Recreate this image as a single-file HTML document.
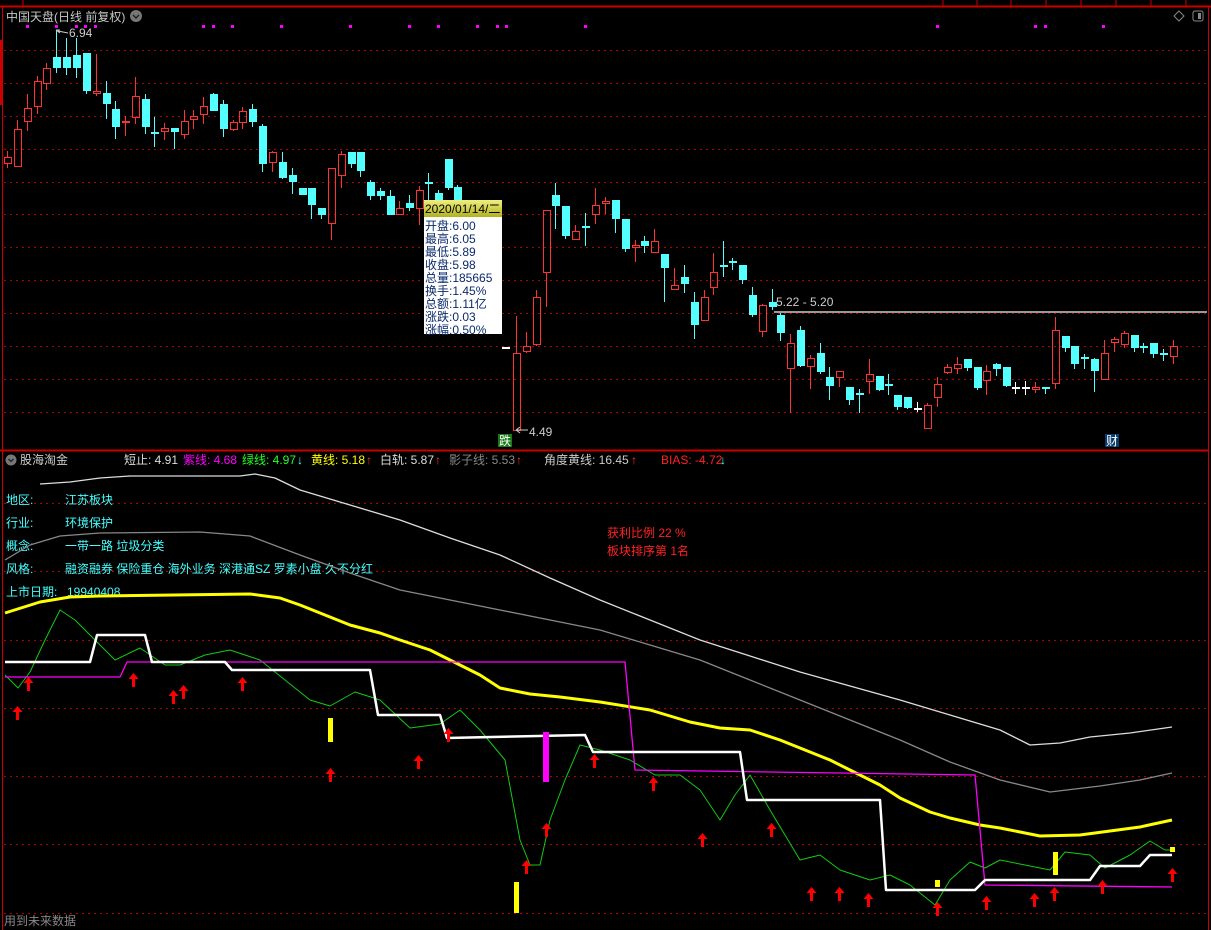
<!DOCTYPE html>
<html><head><meta charset="utf-8"><style>
html,body{margin:0;padding:0;background:#000;width:1211px;height:930px;overflow:hidden}
body{font-family:"Liberation Sans","Noto Sans CJK SC",sans-serif}
svg{position:absolute;left:0;top:0}
.t{font-family:"Liberation Sans","Noto Sans CJK SC",sans-serif;font-size:12px}
</style></head><body>
<svg id="s" width="1211" height="930" xmlns="http://www.w3.org/2000/svg">
<g id="grid" stroke="#b00000" stroke-width="1" stroke-dasharray="2,4"></g>
<line x1="0" y1="6.5" x2="1211" y2="6.5" stroke="#c00" stroke-width="2"/>
<g stroke="#c00"><line x1="23" y1="0" x2="23" y2="6"/><line x1="943" y1="0" x2="943" y2="6"/><line x1="977" y1="0" x2="977" y2="6"/><line x1="1011" y1="0" x2="1011" y2="6"/><line x1="1046" y1="0" x2="1046" y2="6"/><line x1="1081" y1="0" x2="1081" y2="6"/><line x1="1116" y1="0" x2="1116" y2="6"/><line x1="1151" y1="0" x2="1151" y2="6"/><line x1="1186" y1="0" x2="1186" y2="6"/></g>
<line x1="2.5" y1="6" x2="2.5" y2="930" stroke="#c00"/>
<rect x="0" y="40" width="2" height="65" fill="#c00"/>
<line x1="1208.5" y1="6" x2="1208.5" y2="930" stroke="#c00"/>
<line x1="0" y1="450.5" x2="1208" y2="450.5" stroke="#c00" stroke-width="2"/>
<text x="6" y="21" class="t" fill="#c8c8c8" font-size="13">中国天盘(日线 前复权)</text>
<circle cx="136" cy="16" r="6" fill="#777"/><path d="M133 15l3 3 3-3" stroke="#222" fill="none" stroke-width="1.5"/>
<path d="M1179 11l5 5-5 5-5-5z" stroke="#888" fill="none"/>
<rect x="1193" y="11" width="10" height="10" rx="2" stroke="#888" fill="none"/><rect x="1198" y="13" width="3" height="6" fill="#888"/>
<g id="dots" fill="#f0f"></g>
<g id="cand"></g>
<path d="M56 30 l4 0 M56 30 l4 3 M58 31 l10 2" stroke="#ccc" fill="none"/>
<text x="69" y="37" class="t" fill="#ccc">6.94</text>
<path d="M516 430 l12 0 M516 430 l4 -3 M516 430 l4 3" stroke="#ccc" fill="none"/>
<text x="529" y="436" class="t" fill="#ccc">4.49</text>
<rect x="498" y="434" width="14" height="13" fill="#1a7a1a"/><text x="499" y="445" class="t" fill="#fff" font-size="11">跌</text>
<rect x="1105" y="434" width="14" height="13" fill="#0a3a6a"/><text x="1106" y="445" class="t" fill="#fff" font-size="11">财</text>
<line x1="774" y1="312" x2="1207" y2="312" stroke="#999" stroke-width="2"/>
<text x="776" y="306" class="t" fill="#ccc">5.22 - 5.20</text>
<defs><linearGradient id="tg" x1="0" y1="0" x2="0" y2="1"><stop offset="0" stop-color="#f0f080"/><stop offset="1" stop-color="#b0b020"/></linearGradient></defs>
<rect x="424" y="200" width="78" height="134" fill="#fff"/>
<rect x="424" y="200" width="78" height="17" fill="url(#tg)"/>
<g class="t" fill="#0a2a6a" font-size="11">
<text x="425" y="213" fill="#000">2020/01/14/二</text>
<text x="425" y="230">开盘:6.00</text><text x="425" y="243">最高:6.05</text><text x="425" y="256">最低:5.89</text><text x="425" y="269">收盘:5.98</text><text x="425" y="282">总量:185665</text><text x="425" y="295">换手:1.45%</text><text x="425" y="308">总额:1.11亿</text><text x="425" y="321">涨跌:0.03</text><text x="425" y="334">涨幅:0.50%</text>
</g>
<circle cx="11" cy="460" r="5.5" fill="#777"/><path d="M8.5 459l2.5 2.5 2.5-2.5" stroke="#222" fill="none" stroke-width="1.3"/>
<text x="20" y="464" class="t" fill="#ccc">股海淘金</text>
<text x="124" y="464" class="t" fill="#ddd">短止: 4.91</text>
<text x="183" y="464" class="t" fill="#f0f">紫线: 4.68</text>
<text x="242" y="464" class="t" fill="#2f2">绿线: 4.97</text><text x="297" y="464" class="t" fill="#5ff">↓</text>
<text x="311" y="464" class="t" fill="#ff0">黄线: 5.18</text><text x="366" y="464" class="t" fill="#f33">↑</text>
<text x="380" y="464" class="t" fill="#ddd">白轨: 5.87</text><text x="435" y="464" class="t" fill="#f33">↑</text>
<text x="449" y="464" class="t" fill="#888">影子线: 5.53</text><text x="516" y="464" class="t" fill="#f33">↑</text>
<text x="544" y="464" class="t" fill="#ccc">角度黄线: 16.45</text><text x="631" y="464" class="t" fill="#f33">↑</text>
<text x="661" y="464" class="t" fill="#f22">BIAS: -4.72</text><text x="720" y="464" class="t" fill="#5ff">↓</text>
<g class="t" fill="#4ff">
<text x="6" y="504">地区:</text><text x="65" y="504">江苏板块</text>
<text x="6" y="527">行业:</text><text x="65" y="527">环境保护</text>
<text x="6" y="550">概念:</text><text x="65" y="550">一带一路 垃圾分类</text>
<text x="6" y="573">风格:</text><text x="65" y="573">融资融券 保险重仓 海外业务 深港通SZ 罗素小盘 久不分红</text>
<text x="6" y="596">上市日期:</text><text x="67" y="596">19940408</text>
</g>
<text x="607" y="537" class="t" fill="#f22">获利比例 22 %</text>
<text x="607" y="555" class="t" fill="#f22">板块排序第 1名</text>
<text x="4" y="925" class="t" fill="#888">用到未来数据</text>
<g fill="none" stroke-linejoin="round">
<polyline stroke="#ddd" stroke-width="1.3" points="40,484 70,482 100,478 130,476 240,476 255,474 275,478 300,490 350,505 400,520 450,538 500,555 550,578 600,600 650,620 700,640 750,656 800,672 850,686 900,700 950,715 1000,730 1030,745 1060,743 1090,737 1130,733 1172,727"/>
<polyline stroke="#888" stroke-width="1.3" points="5,560 30,545 60,536 100,533 200,532 250,536 300,555 350,573 400,590 450,600 500,610 550,620 600,630 650,645 700,660 750,680 800,700 850,720 900,740 950,762 1000,780 1050,792 1100,786 1140,780 1172,773"/>
<polyline stroke="#ff0" stroke-width="3" points="5,613 40,602 70,597 100,596 250,594 280,598 300,605 330,617 350,625 380,633 400,640 430,650 450,660 480,675 500,688 530,694 560,697 600,702 650,710 690,722 720,728 750,730 780,740 800,748 830,760 850,770 880,785 900,798 930,812 950,818 980,825 1000,828 1040,836 1080,835 1110,831 1140,827 1172,820"/>
<polyline stroke="#1c1" stroke-width="1" points="5,675 18,688 30,672 45,640 60,610 75,620 90,635 115,660 140,648 165,665 180,665 205,655 230,650 260,660 285,680 310,700 330,706 355,692 380,700 410,728 440,724 460,710 480,730 505,760 520,840 530,865 540,865 550,820 565,780 580,745 600,750 630,760 655,775 680,775 700,790 720,820 735,795 750,775 770,810 800,860 820,855 840,870 870,880 890,875 910,885 935,905 950,880 970,862 985,868 1000,860 1025,865 1050,870 1065,852 1090,855 1105,868 1130,855 1150,841 1165,850 1172,850"/>
<polyline stroke="#f0f" stroke-width="1.3" points="5,677 120,677 127,662 625,662 635,770 975,775 985,885 1172,887"/>
<polyline stroke="#fff" stroke-width="2.5" points="5,662 90,662 97,635 145,635 152,662 225,662 232,670 370,670 378,715 440,715 447,738 585,735 593,752 740,752 747,800 880,800 886,890 975,890 985,880 1090,880 1100,866 1140,866 1150,855 1172,855"/>
</g>
<g fill="#ff0"><rect x="328" y="718" width="5" height="24"/><rect x="514" y="882" width="5" height="31"/><rect x="935" y="880" width="5" height="7"/><rect x="1053" y="852" width="5" height="23"/><rect x="1170" y="847" width="5" height="5"/></g>
<rect x="543" y="732" width="6" height="50" fill="#f0f"/>
<g id="arr" fill="#f00"></g>
</svg>
<script>
var s=document.getElementById('s'),NS='http://www.w3.org/2000/svg';
function el(p,t,a){var e=document.createElementNS(NS,t);for(var k in a)e.setAttribute(k,a[k]);p.appendChild(e);return e;}
var g=document.getElementById('grid');
[50,83,116,149,182,214,247,280,313,346,379,412,503,571,640,708,776,844,913].forEach(function(y){el(g,'line',{x1:4,y1:y+.5,x2:1207,y2:y+.5});});
var d=document.getElementById('dots');
[27,56,76,85,95,203,213,232,281,350,409,438,477,497,506,585,937,1035,1045,1103].forEach(function(x){el(d,'rect',{x:x-1,y:25,width:3,height:3});});
var C=[[7,157,163,151,168,'r'],[17,129,166,120,166,'r'],[27,108,121,94,131,'r'],[37,81,106,76,114,'r'],[46,68,83,63,90,'r'],[56,57,68,30,73,'c'],[66,57,68,38,75,'c'],[76,55,68,38,78,'c'],[86,53,91,53,94,'c'],[96,91,93,54,96,'r'],[106,93,104,81,119,'c'],[115,109,127,101,139,'c'],[125,121,122,116,136,'r'],[135,96,117,77,124,'r'],[145,99,127,94,134,'c'],[154,132,134,117,147,'c'],[164,128,131,123,140,'r'],[174,128,132,128,149,'c'],[184,121,134,110,139,'r'],[193,116,119,110,129,'r'],[203,106,114,97,124,'r'],[213,94,111,93,111,'c'],[223,104,129,100,137,'c'],[233,122,129,120,131,'r'],[242,111,122,107,129,'r'],[252,109,122,104,127,'c'],[262,126,164,124,172,'c'],[272,152,162,151,172,'r'],[282,162,178,152,179,'c'],[292,175,182,168,194,'c'],[302,188,195,188,192,'c'],[311,188,205,188,219,'c'],[321,208,215,208,219,'c'],[331,168,223,168,240,'r'],[341,154,175,151,188,'r'],[351,152,164,152,168,'c'],[360,152,171,152,177,'c'],[370,182,196,180,200,'c'],[380,191,196,188,200,'c'],[390,196,215,190,215,'c'],[399,208,214,201,214,'r'],[409,203,208,195,211,'c'],[419,190,208,186,225,'r'],[428,182,184,173,200,'c'],[438,193,205,190,210,'c'],[448,159,188,159,190,'c'],[457,187,200,185,205,'c'],
[505,347,349,347,349,'w'],[516,353,430,316,430,'r'],[526,346,351,332,353,'r'],[536,297,344,290,346,'r'],[546,210,272,210,307,'r'],[555,195,206,183,229,'c'],[565,206,236,206,239,'c'],[575,231,239,225,240,'r'],[585,226,228,213,246,'c'],[595,205,214,188,224,'r'],[605,201,203,197,214,'r'],[615,200,219,200,233,'c'],[625,219,249,219,252,'c'],[635,245,247,240,262,'r'],[644,241,246,236,253,'c'],[654,241,252,229,252,'r'],[664,254,268,254,302,'c'],[674,285,289,268,290,'r'],[684,277,284,265,293,'c'],[694,302,325,292,339,'c'],[704,297,320,290,320,'r'],[713,272,287,253,295,'r'],[723,265,267,241,277,'c'],[732,261,263,258,270,'c'],[742,265,280,265,284,'c'],[752,295,315,287,317,'c'],[762,305,331,304,337,'r'],[772,302,307,289,310,'c'],
[780,315,333,313,341,'c'],[790,343,368,334,413,'r'],[800,330,366,326,367,'c'],[810,358,366,355,389,'r'],[820,353,372,343,374,'c'],[829,377,386,367,400,'c'],[839,371,377,371,387,'r'],[849,387,400,387,405,'c'],[859,393,395,389,413,'c'],[869,374,381,359,394,'r'],[879,376,390,376,391,'c'],[888,384,386,374,395,'c'],[897,395,407,395,410,'c'],[907,397,408,397,409,'c'],[917,408,410,402,412,'w'],[927,405,428,403,428,'r'],[937,384,397,377,407,'r'],[947,367,372,364,374,'r'],[957,364,368,357,374,'r'],[967,359,368,359,371,'c'],[977,367,388,367,390,'c'],[986,371,380,365,395,'r'],[996,364,369,363,376,'c'],[1006,367,386,367,387,'c'],[1015,387,389,382,394,'w'],[1025,387,389,381,395,'w'],[1035,387,389,382,393,'r'],[1045,387,389,387,394,'c'],[1055,330,383,317,389,'r'],[1065,336,348,336,352,'c'],[1074,346,364,346,369,'c'],[1084,357,359,354,369,'c'],[1094,359,371,358,392,'c'],[1104,353,379,340,379,'r'],[1114,339,342,337,352,'r'],[1124,333,344,331,348,'r'],[1134,335,348,335,352,'c'],[1143,346,348,343,353,'c'],[1153,343,354,343,358,'c'],[1163,353,355,349,361,'c'],[1173,346,356,340,364,'r']];
var cg=document.getElementById('cand');
C.forEach(function(c){var x=c[0],col=c[5]=='r'?'#ff3232':(c[5]=='c'?'#54ffff':'#fff');
 if(c[5]=='r'){el(cg,'line',{x1:x+.5,y1:c[3],x2:x+.5,y2:c[1],stroke:col});el(cg,'line',{x1:x+.5,y1:c[2],x2:x+.5,y2:c[4],stroke:col});
  el(cg,'rect',{x:x-3+.5,y:c[1]+.5,width:7,height:Math.max(c[2]-c[1],1),fill:'none',stroke:col});}
 else{el(cg,'line',{x1:x+.5,y1:c[3],x2:x+.5,y2:c[4],stroke:col});el(cg,'rect',{x:x-3,y:c[1],width:8,height:Math.max(c[2]-c[1],2),fill:col});}
});
var ag=document.getElementById('arr');
[[17,706],[28,677],[133,673],[173,690],[183,685],[242,677],[330,768],[418,755],[448,728],[526,860],[546,823],[594,754],[653,777],[702,833],[771,823],[811,887],[839,887],[868,893],[937,902],[986,896],[1034,893],[1054,887],[1102,880],[1172,868]].forEach(function(a){var x=a[0]+.5,y=a[1];
 el(ag,'path',{d:'M'+x+' '+y+'l5 6h-3.5v8h-3v-8h-3.5z'});});
</script>
</body></html>
